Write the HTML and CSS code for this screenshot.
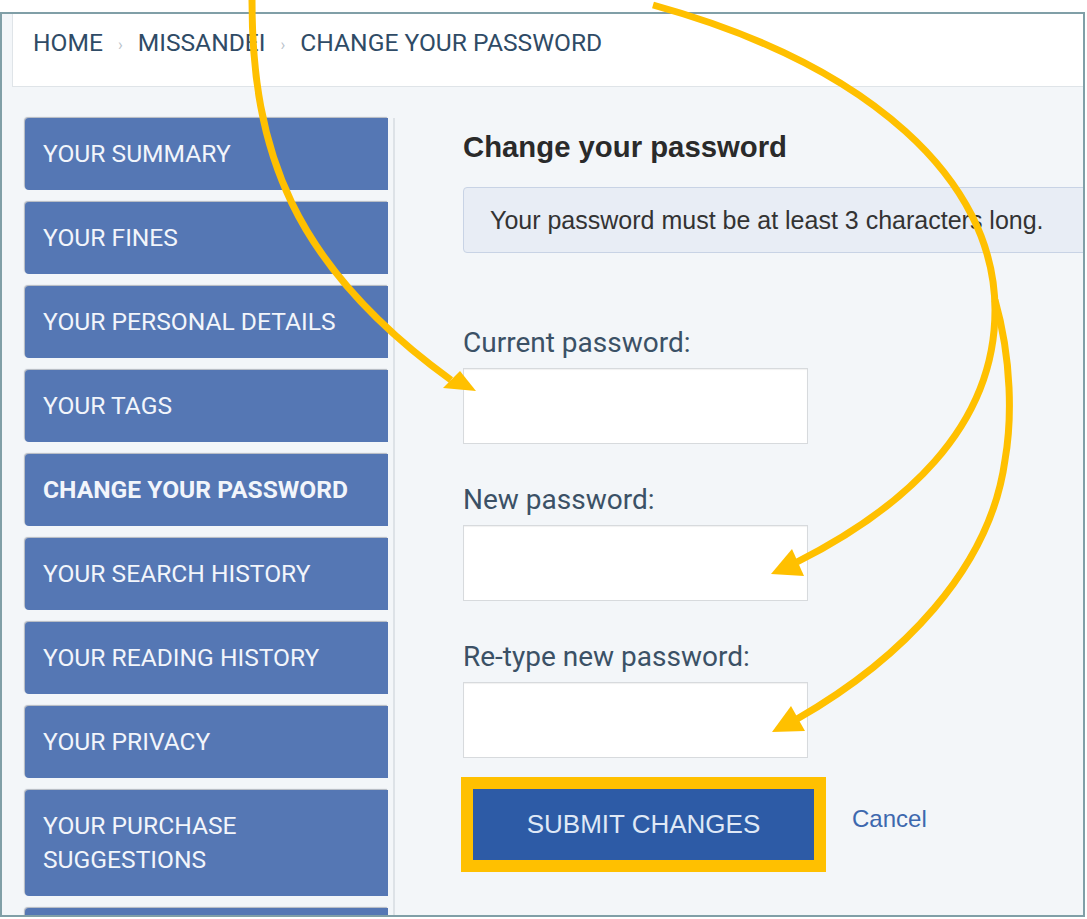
FILE: index.html
```html
<!DOCTYPE html>
<html lang="en">
<head>
<meta charset="utf-8">
<title>Change your password</title>
<link rel="stylesheet" href="styles.css">
</head>
<body>
<div class="frame">
  <nav class="crumbs">
    <a class="crumb" href="#">HOME</a><span class="sep">›</span><a class="crumb" href="#">MISSANDEI</a><span class="sep">›</span><span class="crumb">CHANGE YOUR PASSWORD</span>
  </nav>
  <div class="layout">
    <aside class="sidebar">
      <a class="nav-item" href="#">YOUR SUMMARY</a>
      <a class="nav-item" href="#">YOUR FINES</a>
      <a class="nav-item" href="#">YOUR PERSONAL DETAILS</a>
      <a class="nav-item" href="#">YOUR TAGS</a>
      <a class="nav-item active" href="#">CHANGE YOUR PASSWORD</a>
      <a class="nav-item" href="#">YOUR SEARCH HISTORY</a>
      <a class="nav-item" href="#">YOUR READING HISTORY</a>
      <a class="nav-item" href="#">YOUR PRIVACY</a>
      <a class="nav-item" href="#">YOUR PURCHASE SUGGESTIONS</a>
      <span class="nav-item nav-stub" aria-hidden="true"></span>
    </aside>
    <main class="content">
      <h1 class="title">Change your password</h1>
      <div class="notice">Your password must be at least 3 characters long.</div>
      <form class="form">
        <div class="field">
          <label class="label" for="cur">Current password:</label>
          <input class="input" id="cur" type="password">
        </div>
        <div class="field">
          <label class="label" for="new1">New password:</label>
          <input class="input" id="new1" type="password">
        </div>
        <div class="field">
          <label class="label" for="new2">Re-type new password:</label>
          <input class="input" id="new2" type="password">
        </div>
        <div class="actions">
          <button class="submit" type="button">SUBMIT CHANGES</button>
          <a class="cancel" href="#">Cancel</a>
        </div>
      </form>
    </main>
  </div>
</div>
<svg class="arrows" width="1087" height="919" viewBox="0 0 1087 919">
  <g fill="none" stroke="#ffc000" stroke-width="7">
    <path d="M252,0 C252,150 292,265 451,380"/>
    <path d="M653,5 C870,65 995,180 995,310 C995,430 900,510 797,562"/>
    <path d="M995,300 C1012,360 1012,420 1005,460 C990,570 900,660 797,719"/>
  </g>
  <g fill="#ffc000">
    <polygon points="460,371 443,388 476,391"/>
    <polygon points="792,549 771,574 804,576"/>
    <polygon points="791,706 772,732 805,731"/>
  </g>
</svg>
</body>
</html>
```
FILE: styles.css
```css
* { box-sizing: border-box; }
html, body { margin: 0; padding: 0; }
body {
  position: relative;
  width: 1087px;
  height: 919px;
  overflow: hidden;
  background: #ffffff;
  font-family: Roboto, "Liberation Sans", Arial, sans-serif;
}
.frame {
  margin-top: 12px;
  width: 1085px;
  height: 905px;
  border: 2px solid #809fa7;
  background: #f3f6f9;
  overflow: hidden;
}
.crumbs {
  margin-left: 10px;
  height: 73px;
  padding: 15px 0 0 20px;
  background: #ffffff;
  border-left: 1px solid #dfe4e8;
  border-bottom: 1px solid #dfe4e8;
  display: flex;
  align-items: flex-start;
  white-space: nowrap;
}
.crumb {
  font-size: 24.6px;
  line-height: 28px;
  color: #2f4b66;
  text-decoration: none;
}
.sep {
  font-size: 16px;
  line-height: 28px;
  color: #b9c2ca;
  padding: 2px 15px 0 15px;
}
.layout {
  display: flex;
  padding: 31px 0 0 23px;
}
.sidebar {
  width: 370px;
  flex: none;
  padding-right: 5px;
  border-right: 2px solid #dde2e7;
  display: flex;
  flex-direction: column;
  gap: 12px;
  min-height: 900px;
}
.nav-item {
  display: block;
  background: #5577b4;
  color: #f2f5fb;
  text-decoration: none;
  font-size: 24.6px;
  line-height: 34px;
  padding: 19px 18px;
  border-radius: 4px 0 0 4px;
  box-shadow: -1px -1px 1px rgba(60, 70, 90, 0.35);
}
.nav-item.active { font-weight: 700; }
.nav-stub { height: 72px; }
.content {
  flex: none;
  width: 690px;
  padding-left: 68px;
}
.title {
  margin: 12px 0 0 0;
  font-family: "Liberation Sans", Arial, sans-serif;
  font-weight: 700;
  font-size: 29.3px;
  line-height: 34px;
  color: #2a2a2a;
}
.notice {
  margin-top: 23px;
  margin-right: -40px;
  height: 66px;
  padding: 17px 26px;
  background: #e8edf5;
  border: 1px solid #c8d3e5;
  border-radius: 4px;
  font-family: "Liberation Sans", Arial, sans-serif;
  font-size: 25px;
  line-height: 30px;
  color: #333333;
  white-space: nowrap;
}
.form {
  display: flex;
  flex-direction: column;
  gap: 40px;
  margin-top: 74px;
}
.field {
  display: flex;
  flex-direction: column;
  gap: 9px;
}
.label {
  font-size: 28px;
  line-height: 32px;
  color: #3b5166;
}
.input {
  width: 345px;
  height: 76px;
  background: #ffffff;
  border: 1px solid #d7dadd;
  box-shadow: inset 0 1px 1px rgba(0, 0, 0, 0.06);
  margin: 0;
}
.actions {
  margin-top: -9px;
  display: flex;
  align-items: center;
  gap: 38px;
}
.submit {
  margin-left: 10px;
  width: 341px;
  height: 71px;
  background: #2d5ba6;
  border: none;
  outline: 12px solid #ffc000;
  color: #dfe8f6;
  font-family: "Liberation Sans", Arial, sans-serif;
  font-size: 26px;
  padding: 0;
}
.cancel {
  font-family: "Liberation Sans", Arial, sans-serif;
  font-size: 24px;
  color: #3d68ae;
  text-decoration: none;
  margin-bottom: 12px;
}
.arrows {
  position: absolute;
  left: 0;
  top: 0;
  pointer-events: none;
}
```
